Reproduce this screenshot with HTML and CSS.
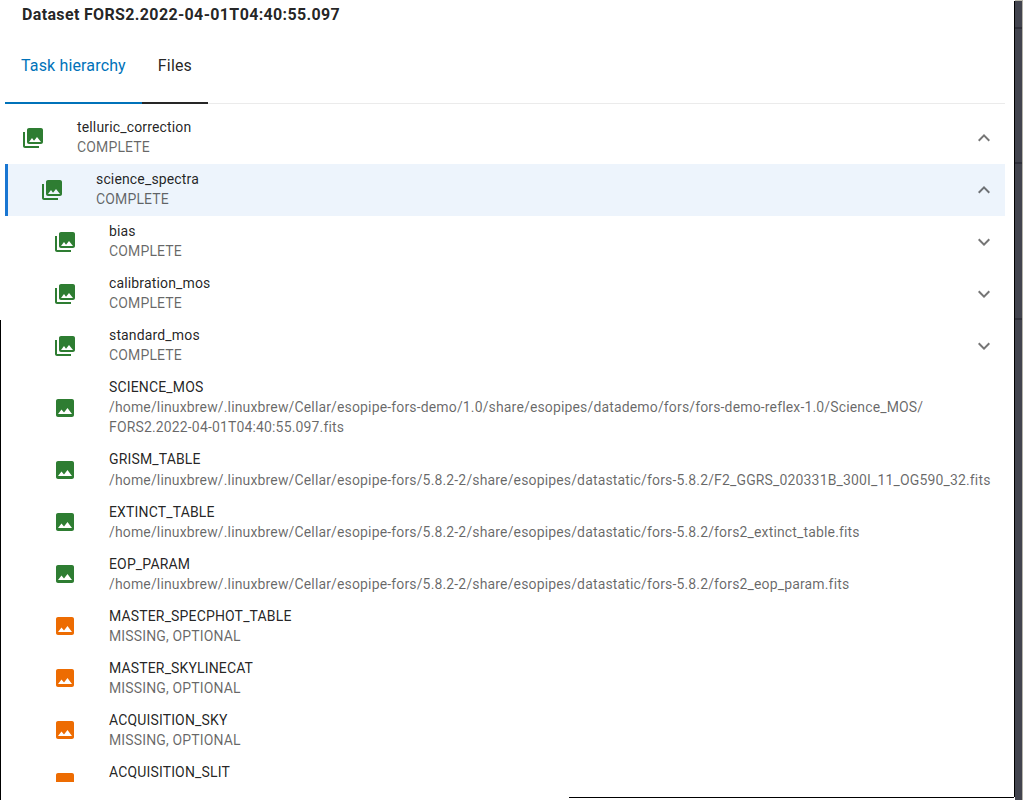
FILE: index.html
```html
<!DOCTYPE html>
<html lang="en">
<head>
    <meta charset="UTF-8" />
    <meta name="viewport" content="width=device-width, initial-scale=1.0" />
    <title>Dataset FORS2.2022-04-01T04:40:55.097</title>
    <link rel="stylesheet" href="styles.css">
</head>
<body>
    <!-- icons shared by the rows -->
    <svg class="icon-defs" width="0" height="0">
        <symbol id="library" viewBox="0 0 24 24">
            <path d="M22 16V4c0-1.100-.9-2-2-2H8c-1.100 0-2 .9-2 2v12c0 1.100.9 2 2 2h12c1.100 0 2-.9 2-2m-11-4 2.030 2.710L16 11l4 5H8zM2 6v14c0 1.100.9 2 2 2h14v-2H4V6z" />
        </symbol>
        <symbol id="image" viewBox="0 0 24 24">
            <path d="M21 19V5c0-1.100-.9-2-2-2H5c-1.100 0-2 .9-2 2v14c0 1.100.9 2 2 2h14c1.100 0 2-.9 2-2M8.500 13.500l2.500 3.010L14.500 12l4.500 6H5z" />
        </symbol>
        <symbol id="less" viewBox="0 0 24 24">
            <path d="m12 8-6 6 1.410 1.410L12 10.830l4.590 4.580L18 14z" />
        </symbol>
        <symbol id="more" viewBox="0 0 24 24">
            <path d="M16.590 8.590 12 13.170 7.410 8.590 6 10l6 6 6-6z" />
        </symbol>
    </svg>

    <div class="window">
        <main class="panel">
            <h1 class="title">Dataset FORS2.2022-04-01T04:40:55.097</h1>
            <nav class="tabs">
                <a class="tab active">Task hierarchy</a>
                <a class="tab">Files</a>
            </nav>
            <ul class="list">
                <li class="row level-1">
                    <svg class="icon green"><use href="#library" /></svg>
                    <div class="text"><p>telluric_correction</p><p class="sub">COMPLETE</p></div>
                    <svg class="chevron"><use href="#less" /></svg>
                </li>
                <li class="row level-2 selected">
                    <svg class="icon green"><use href="#library" /></svg>
                    <div class="text"><p>science_spectra</p><p class="sub">COMPLETE</p></div>
                    <svg class="chevron"><use href="#less" /></svg>
                </li>
                <li class="row">
                    <svg class="icon green"><use href="#library" /></svg>
                    <div class="text"><p>bias</p><p class="sub">COMPLETE</p></div>
                    <svg class="chevron"><use href="#more" /></svg>
                </li>
                <li class="row">
                    <svg class="icon green"><use href="#library" /></svg>
                    <div class="text"><p>calibration_mos</p><p class="sub">COMPLETE</p></div>
                    <svg class="chevron"><use href="#more" /></svg>
                </li>
                <li class="row">
                    <svg class="icon green"><use href="#library" /></svg>
                    <div class="text"><p>standard_mos</p><p class="sub">COMPLETE</p></div>
                    <svg class="chevron"><use href="#more" /></svg>
                </li>
                <li class="row">
                    <svg class="icon green"><use href="#image" /></svg>
                    <div class="text"><p>SCIENCE_MOS</p><p class="sub">/home/linuxbrew/.linuxbrew/Cellar/esopipe-fors-demo/1.0/share/esopipes/datademo/fors/fors-demo-reflex-1.0/Science_MOS/<br>FORS2.2022-04-01T04:40:55.097.fits</p></div>
                </li>
                <li class="row">
                    <svg class="icon green"><use href="#image" /></svg>
                    <div class="text"><p>GRISM_TABLE</p><p class="sub">/home/linuxbrew/.linuxbrew/Cellar/esopipe-fors/5.8.2-2/share/esopipes/datastatic/fors-5.8.2/F2_GGRS_020331B_300I_11_OG590_32.fits</p></div>
                </li>
                <li class="row">
                    <svg class="icon green"><use href="#image" /></svg>
                    <div class="text"><p>EXTINCT_TABLE</p><p class="sub">/home/linuxbrew/.linuxbrew/Cellar/esopipe-fors/5.8.2-2/share/esopipes/datastatic/fors-5.8.2/fors2_extinct_table.fits</p></div>
                </li>
                <li class="row">
                    <svg class="icon green"><use href="#image" /></svg>
                    <div class="text"><p>EOP_PARAM</p><p class="sub">/home/linuxbrew/.linuxbrew/Cellar/esopipe-fors/5.8.2-2/share/esopipes/datastatic/fors-5.8.2/fors2_eop_param.fits</p></div>
                </li>
                <li class="row">
                    <svg class="icon orange"><use href="#image" /></svg>
                    <div class="text"><p>MASTER_SPECPHOT_TABLE</p><p class="sub">MISSING, OPTIONAL</p></div>
                </li>
                <li class="row">
                    <svg class="icon orange"><use href="#image" /></svg>
                    <div class="text"><p>MASTER_SKYLINECAT</p><p class="sub">MISSING, OPTIONAL</p></div>
                </li>
                <li class="row">
                    <svg class="icon orange"><use href="#image" /></svg>
                    <div class="text"><p>ACQUISITION_SKY</p><p class="sub">MISSING, OPTIONAL</p></div>
                </li>
                <!-- last row is cut off by the scroll area -->
                <li class="row">
                    <svg class="icon orange"><use href="#image" /></svg>
                    <div class="text"><p>ACQUISITION_SLIT</p><p class="sub">&nbsp;</p></div>
                </li>
            </ul>
        </main>
        <aside class="edge"></aside>
    </div>
</body>
</html>
```
FILE: styles.css
```css
* { box-sizing: border-box; margin: 0; padding: 0; }
body {
    font-family: Roboto, "Liberation Sans", sans-serif;
    background-color: #fff;
    color: rgba(0,0,0,0.87);
    overflow: hidden;
}
.icon-defs {
    position: absolute;
}
.window {
    display: flex;
    height: 800px;
}
.panel {
    position: relative;
    width: 1014px;
    padding: 4px 9px 0 5px;
}
/* thin window border, left and bottom */
.panel::before {
    content: "";
    position: absolute;
    left: 0;
    top: 320px;
    bottom: 0;
    width: 1px;
    background: #000;
}
.panel::after {
    content: "";
    position: absolute;
    left: 569px;
    right: 0;
    bottom: 2px;
    height: 1px;
    background: #000;
}
.title {
    padding-left: 17px;
    height: 24px;
    line-height: 21px;
    font-size: 16px;
    font-weight: 700;
    letter-spacing: 0.35px;
}
.tabs {
    display: flex;
    height: 76px;
    box-shadow: inset 0 -1px #ebebeb;
}
.tab {
    padding: 0 16px;
    height: 76px;
    line-height: 75px;
    font-size: 16px;
    letter-spacing: 0.15px;
    border-bottom: 2px solid #262626;
}
.tab.active {
    color: #0072b9;
    border-color: #0072b9;
}
.list {
    list-style: none;
    width: 1000px;
    height: 678px;
    padding-top: 8px;
    overflow: hidden;
}
.row {
    display: flex;
    align-items: center;
    padding: 6px 9px 6px 48px;
    font-size: 14px;
    line-height: 1.43;
    letter-spacing: 0.01071em;
}
.level-1 { padding-left: 16px; }
.level-2 { padding-left: 32px; }
.selected {
    background: #edf4fc;
    border-left: 3px solid #1976d2;
}
.icon {
    flex: none;
    width: 24px;
    height: 24px;
    margin-right: 32px;
}
.green { fill: #2e7d32; }
.orange { fill: #ed6c02; }
.text {
    flex: 1;
    margin: -0.73px 0 0.73px;
    white-space: nowrap;
}
.sub {
    color: rgba(0,0,0,0.6);
}
.chevron {
    width: 24px;
    height: 24px;
    fill: rgba(0,0,0,0.54);
}
/* page visible behind the dialog */
.edge {
    width: 9px;
    border-right: 1px solid #b5b3aa;
    background:
        linear-gradient(#bdbbaf, #bdbbaf) 1px 0 / 8px 1px no-repeat,
        linear-gradient(#000, #000) 0 1px / 1px 796px no-repeat,
        linear-gradient(#fff, #fff) 0 0 / 1px 800px no-repeat,
        linear-gradient(#30313b, #30313b) 0 27px / 8px 2px no-repeat,
        linear-gradient(#30313b, #30313b) 0 162px / 8px 2px no-repeat,
        linear-gradient(#30313b, #30313b) 0 318px / 8px 2px no-repeat,
        #42444e;
}
```
